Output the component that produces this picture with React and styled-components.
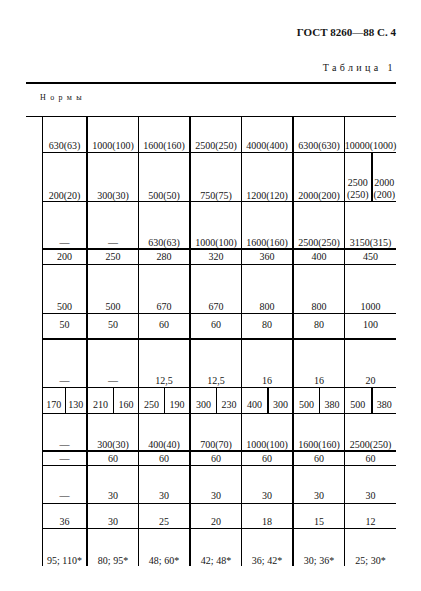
import React from "react";
import styled, { createGlobalStyle } from "styled-components";

const GlobalStyle = createGlobalStyle`
  html, body { margin: 0; padding: 0; background: #fff; }
  body { font-family: "Liberation Serif", "Times New Roman", serif; color: #141414; }
`;

const Page = styled.div`
  width: 421px;
  height: 591px;
  box-sizing: border-box;
  padding: 25px 25px 0 26px;
  overflow: hidden;
`;

const Header = styled.header`
  display: flex;
  flex-direction: column;
  align-items: flex-end;
`;

const DocCode = styled.div`
  font-size: 11px;
  font-weight: bold;
  line-height: 14px;
`;

const TableTitle = styled.div`
  margin-top: 22px;
  font-size: 10px;
  line-height: 14px;
  letter-spacing: 3.4px;
`;

const TableFrame = styled.section`
  margin-top: 7px;
  border-top: 2px solid #000;
`;

const NormsHead = styled.div`
  height: 33px;
  box-sizing: border-box;
  border-bottom: 1px solid #000;
  padding: 9px 0 0 14px;
  font-size: 8px;
  line-height: 10px;
  letter-spacing: 4.4px;
`;

const Grid = styled.div`
  margin-left: 16px;
  display: flex;
  flex-direction: column;
`;

const COLS = "44px 52px 51px 52px 51px 52px 52px";

const Row = styled.div`
  display: grid;
  grid-template-columns: ${COLS};
  height: ${(p) => p.$h}px;
  box-sizing: border-box;
  border-bottom: ${(p) => (p.$rule === "thick" ? "2px solid #000" : p.$rule === "none" ? "none" : "1px solid #000")};
`;

const Cell = styled.div`
  box-sizing: border-box;
  border-left: ${(p) => (p.$thick ? 2 : 1)}px solid #000;
  display: flex;
  align-items: flex-end;
  justify-content: center;
  padding-bottom: ${(p) => p.$pad}px;
  font-size: 10px;
  line-height: 11px;
  white-space: nowrap;
`;

const SplitCell = styled.div`
  box-sizing: border-box;
  border-left: ${(p) => (p.$thick ? 2 : 1)}px solid #000;
  display: grid;
  grid-template-columns: 1fr 1fr;
`;

const SubCell = styled.div`
  box-sizing: border-box;
  border-left: ${(p) => (p.$divider ? `${p.$divider}px solid #000` : "none")};
  display: flex;
  flex-direction: column;
  align-items: center;
  justify-content: flex-end;
  padding-bottom: ${(p) => p.$pad}px;
  font-size: 10px;
  line-height: ${(p) => (p.$stack ? 12 : 11)}px;
  white-space: nowrap;
`;

const rows = [
  { h: 36, pad: 1.5, cells: ["630(63)", "1000(100)", "1600(160)", "2500(250)", "4000(400)", "6300(630)", "10000(1000)"] },
  { h: 49, pad: 0.5, cells: ["200(20)", "300(30)", "500(50)", "750(75)", "1200(120)", "2000(200)", { split: [["2500", "(250)"], ["2000", "(200)"]], div: 2 }] },
  { h: 48, pad: 0, rule: "thick", cells: ["—", "—", "630(63)", "1000(100)", "1600(160)", "2500(250)", "3150(315)"] },
  { h: 15, pad: 1.8, cells: ["200", "250", "280", "320", "360", "400", "450"] },
  { h: 49, pad: 0.8, cells: ["500", "500", "670", "670", "800", "800", "1000"] },
  { h: 26, pad: 8.5, rule: "thick", cells: ["50", "50", "60", "60", "80", "80", "100"] },
  { h: 48, pad: 1.5, cells: ["—", "—", "12,5", "12,5", "16", "16", "20"] },
  {
    h: 26,
    pad: 2.8,
    cells: [
      { split: [["170"], ["130"]], div: 1 },
      { split: [["210"], ["160"]], div: 1 },
      { split: [["250"], ["190"]], div: 1 },
      { split: [["300"], ["230"]], div: 1 },
      { split: [["400"], ["300"]], div: 2 },
      { split: [["500"], ["380"]], div: 1 },
      { split: [["500"], ["380"]], div: 2 },
    ],
  },
  { h: 38, pad: 0.5, rule: "thick", cells: ["—", "300(30)", "400(40)", "700(70)", "1000(100)", "1600(160)", "2500(250)"] },
  { h: 14, pad: 1.2, cells: ["—", "60", "60", "60", "60", "60", "60"] },
  { h: 38, pad: 2.5, cells: ["—", "30", "30", "30", "30", "30", "30"] },
  { h: 25, pad: 0.8, cells: ["36", "30", "25", "20", "18", "15", "12"] },
  { h: 37, pad: 0.5, rule: "none", cells: ["95; 110*", "80; 95*", "48; 60*", "42; 48*", "36; 42*", "30; 36*", "25; 30*"] },
];

export default function App() {
  return (
    <>
      <GlobalStyle />
      <Page>
        <Header>
          <DocCode>ГОСТ 8260—88 С. 4</DocCode>
          <TableTitle>Таблица 1</TableTitle>
        </Header>
        <TableFrame>
          <NormsHead>Нормы</NormsHead>
          <Grid>
            {rows.map((r, ri) => (
              <Row key={ri} $h={r.h} $rule={r.rule}>
                {r.cells.map((c, ci) => {
                  const thick = ci % 2 === 1;
                  if (typeof c === "string") {
                    return (
                      <Cell key={ci} $thick={thick} $pad={r.pad}>
                        {c}
                      </Cell>
                    );
                  }
                  return (
                    <SplitCell key={ci} $thick={thick}>
                      {c.split.map((lines, si) => (
                        <SubCell key={si} $divider={si === 1 ? c.div : 0} $pad={r.pad} $stack={lines.length > 1}>
                          {lines.map((l, li) => (
                            <span key={li}>{l}</span>
                          ))}
                        </SubCell>
                      ))}
                    </SplitCell>
                  );
                })}
              </Row>
            ))}
          </Grid>
        </TableFrame>
      </Page>
    </>
  );
}
